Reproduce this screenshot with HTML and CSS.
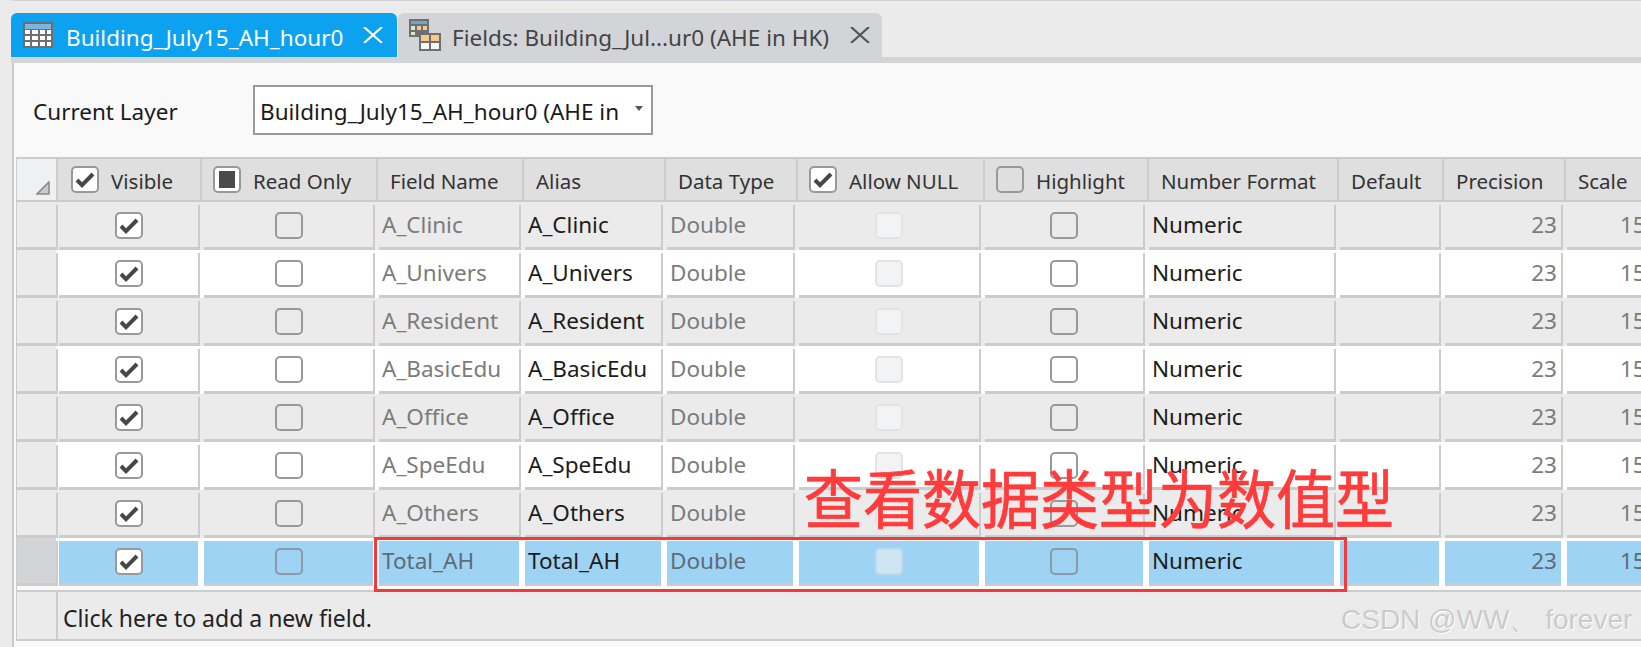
FILE: index.html
```html
<!DOCTYPE html>
<html>
<head>
	<meta charset="utf-8">
	<title>Fields: Building_July15_AH_hour0</title>
	<link rel="stylesheet" href="styles.css">
</head>
<body>
	<svg class="defs" width="0" height="0">
		<symbol id="check" viewBox="0 0 28 27">
			<path d="M6 14l5 5.2L22 8" fill="none" stroke="#484848" stroke-width="4"/>
		</symbol>
	</svg>

	<div class="tabs">
		<div class="tab tab-active">
			<svg class="tab-icon" width="30" height="26" viewBox="0 0 30 26">
				<rect width="30" height="26" fill="#6f6f6f"/>
				<rect x="2" y="2" width="26" height="5" fill="#7cb5e3"/>
				<path d="M2 8h5v4H2zM9 8h6v4H9zM17 8h5v4h-5zM24 8h4v4h-4zM2 14h5v4H2zM9 14h6v4H9zM17 14h5v4h-5zM24 14h4v4h-4zM2 20h5v4H2zM9 20h6v4H9zM17 20h5v4h-5zM24 20h4v4h-4z" fill="#fff"/>
			</svg>
			<span class="tab-title">Building_July15_AH_hour0</span>
			<svg class="tab-close" width="20" height="16" viewBox="0 0 20 16"><path d="M1 0l18 16M19 0L1 16" stroke-width="2.2"/></svg>
		</div>
		<div class="tab">
			<svg class="tab-icon" width="32" height="32" viewBox="0 0 32 32">
				<rect width="20" height="18" fill="#707070"/>
				<rect x="2" y="2" width="16" height="3" fill="#6ba6d8"/>
				<path d="M2 7h4v4H2zM2 13h4v3H2z" fill="#d5e8d0"/>
				<path d="M8 7h4v4H8zM14 7h4v4h-4z" fill="#f6c88f"/>
				<rect x="10" y="14" width="22" height="18" fill="#6f6f6f"/>
				<path d="M12 16h8v6h-8zM22 16h8v6h-8z" fill="#f8c98e"/>
				<path d="M12 24h8v6h-8zM22 24h8v6h-8z" fill="#f7f7f7"/>
			</svg>
			<span class="tab-title">Fields: Building_Jul...ur0 (AHE in HK)</span>
			<svg class="tab-close" width="20" height="16" viewBox="0 0 20 16"><path d="M1 0l18 16M19 0L1 16" stroke-width="2.2"/></svg>
		</div>
	</div>
	<div class="tab-strip"></div>

	<div class="panel">
		<div class="toolbar">
			<label class="layer-label">Current Layer</label>
			<div class="combo">
				<span class="combo-text">Building_July15_AH_hour0 (AHE in</span>
				<span class="combo-caret"></span>
			</div>
		</div>

		<div class="table">
			<div class="head">
				<div class="corner">
					<svg width="14" height="14" viewBox="0 0 14 14"><path d="M13 1v12H1z" fill="#c9cacd" stroke="#8c8c8c" stroke-width="1.6"/></svg>
				</div>
				<div class="th th-check th-visible"><span class="box box-white"><svg><use href="#check"/></svg></span><span class="th-label">Visible</span></div>
				<div class="th th-check th-readonly"><span class="box box-white"><i class="square"></i></span><span class="th-label">Read Only</span></div>
				<div class="th"><span class="th-label">Field Name</span></div>
				<div class="th th-alias"><span class="th-label">Alias</span></div>
				<div class="th"><span class="th-label">Data Type</span></div>
				<div class="th th-check"><span class="box box-white"><svg><use href="#check"/></svg></span><span class="th-label">Allow NULL</span></div>
				<div class="th th-check"><span class="box"></span><span class="th-label">Highlight</span></div>
				<div class="th"><span class="th-label">Number Format</span></div>
				<div class="th"><span class="th-label">Default</span></div>
				<div class="th"><span class="th-label">Precision</span></div>
				<div class="th"><span class="th-label">Scale</span></div>
			</div>

			<div class="row row-gray">
				<div class="rowhead"></div>
				<div class="td td-first"><div class="in mid"><span class="box box-white"><svg><use href="#check"/></svg></span></div></div>
				<div class="td"><div class="in mid"><span class="box"></span></div></div>
				<div class="td"><div class="in dim">A_Clinic</div></div>
				<div class="td"><div class="in strong">A_Clinic</div></div>
				<div class="td"><div class="in dim">Double</div></div>
				<div class="td"><div class="in mid"><span class="box box-off"></span></div></div>
				<div class="td"><div class="in mid"><span class="box"></span></div></div>
				<div class="td"><div class="in strong">Numeric</div></div>
				<div class="td"><div class="in"></div></div>
				<div class="td"><div class="in dim num">23</div></div>
				<div class="td"><div class="in dim scale">15</div></div>
			</div>
			<div class="row">
				<div class="rowhead"></div>
				<div class="td td-first"><div class="in mid"><span class="box box-white"><svg><use href="#check"/></svg></span></div></div>
				<div class="td"><div class="in mid"><span class="box"></span></div></div>
				<div class="td"><div class="in dim">A_Univers</div></div>
				<div class="td"><div class="in strong">A_Univers</div></div>
				<div class="td"><div class="in dim">Double</div></div>
				<div class="td"><div class="in mid"><span class="box box-off"></span></div></div>
				<div class="td"><div class="in mid"><span class="box"></span></div></div>
				<div class="td"><div class="in strong">Numeric</div></div>
				<div class="td"><div class="in"></div></div>
				<div class="td"><div class="in dim num">23</div></div>
				<div class="td"><div class="in dim scale">15</div></div>
			</div>
			<div class="row row-gray">
				<div class="rowhead"></div>
				<div class="td td-first"><div class="in mid"><span class="box box-white"><svg><use href="#check"/></svg></span></div></div>
				<div class="td"><div class="in mid"><span class="box"></span></div></div>
				<div class="td"><div class="in dim">A_Resident</div></div>
				<div class="td"><div class="in strong">A_Resident</div></div>
				<div class="td"><div class="in dim">Double</div></div>
				<div class="td"><div class="in mid"><span class="box box-off"></span></div></div>
				<div class="td"><div class="in mid"><span class="box"></span></div></div>
				<div class="td"><div class="in strong">Numeric</div></div>
				<div class="td"><div class="in"></div></div>
				<div class="td"><div class="in dim num">23</div></div>
				<div class="td"><div class="in dim scale">15</div></div>
			</div>
			<div class="row">
				<div class="rowhead"></div>
				<div class="td td-first"><div class="in mid"><span class="box box-white"><svg><use href="#check"/></svg></span></div></div>
				<div class="td"><div class="in mid"><span class="box"></span></div></div>
				<div class="td"><div class="in dim">A_BasicEdu</div></div>
				<div class="td"><div class="in strong">A_BasicEdu</div></div>
				<div class="td"><div class="in dim">Double</div></div>
				<div class="td"><div class="in mid"><span class="box box-off"></span></div></div>
				<div class="td"><div class="in mid"><span class="box"></span></div></div>
				<div class="td"><div class="in strong">Numeric</div></div>
				<div class="td"><div class="in"></div></div>
				<div class="td"><div class="in dim num">23</div></div>
				<div class="td"><div class="in dim scale">15</div></div>
			</div>
			<div class="row row-gray">
				<div class="rowhead"></div>
				<div class="td td-first"><div class="in mid"><span class="box box-white"><svg><use href="#check"/></svg></span></div></div>
				<div class="td"><div class="in mid"><span class="box"></span></div></div>
				<div class="td"><div class="in dim">A_Office</div></div>
				<div class="td"><div class="in strong">A_Office</div></div>
				<div class="td"><div class="in dim">Double</div></div>
				<div class="td"><div class="in mid"><span class="box box-off"></span></div></div>
				<div class="td"><div class="in mid"><span class="box"></span></div></div>
				<div class="td"><div class="in strong">Numeric</div></div>
				<div class="td"><div class="in"></div></div>
				<div class="td"><div class="in dim num">23</div></div>
				<div class="td"><div class="in dim scale">15</div></div>
			</div>
			<div class="row">
				<div class="rowhead"></div>
				<div class="td td-first"><div class="in mid"><span class="box box-white"><svg><use href="#check"/></svg></span></div></div>
				<div class="td"><div class="in mid"><span class="box"></span></div></div>
				<div class="td"><div class="in dim">A_SpeEdu</div></div>
				<div class="td"><div class="in strong">A_SpeEdu</div></div>
				<div class="td"><div class="in dim">Double</div></div>
				<div class="td"><div class="in mid"><span class="box box-off"></span></div></div>
				<div class="td"><div class="in mid"><span class="box"></span></div></div>
				<div class="td"><div class="in strong">Numeric</div></div>
				<div class="td"><div class="in"></div></div>
				<div class="td"><div class="in dim num">23</div></div>
				<div class="td"><div class="in dim scale">15</div></div>
			</div>
			<div class="row row-gray">
				<div class="rowhead"></div>
				<div class="td td-first"><div class="in mid"><span class="box box-white"><svg><use href="#check"/></svg></span></div></div>
				<div class="td"><div class="in mid"><span class="box"></span></div></div>
				<div class="td"><div class="in dim">A_Others</div></div>
				<div class="td"><div class="in strong">A_Others</div></div>
				<div class="td"><div class="in dim">Double</div></div>
				<div class="td"><div class="in mid"><span class="box box-off"></span></div></div>
				<div class="td"><div class="in mid"><span class="box"></span></div></div>
				<div class="td"><div class="in strong">Numeric</div></div>
				<div class="td"><div class="in"></div></div>
				<div class="td"><div class="in dim num">23</div></div>
				<div class="td"><div class="in dim scale">15</div></div>
			</div>
			<div class="row row-selected">
				<div class="rowhead"></div>
				<div class="td td-first"><div class="in mid"><span class="box box-white"><svg><use href="#check"/></svg></span></div></div>
				<div class="td"><div class="in mid"><span class="box"></span></div></div>
				<div class="td"><div class="in dim">Total_AH</div></div>
				<div class="td"><div class="in strong">Total_AH</div></div>
				<div class="td"><div class="in dim">Double</div></div>
				<div class="td"><div class="in mid"><span class="box box-off"></span></div></div>
				<div class="td"><div class="in mid"><span class="box"></span></div></div>
				<div class="td"><div class="in strong">Numeric</div></div>
				<div class="td"><div class="in"></div></div>
				<div class="td"><div class="in dim num">23</div></div>
				<div class="td"><div class="in dim scale">15</div></div>
			</div>

			<div class="add-row">
				<div class="add-corner"></div>
				<div class="add-text">Click here to add a new field.</div>
			</div>
		</div>
	</div>

	<!-- annotation drawn over the screenshot -->
	<div class="note-box"></div>
	<div class="note-text">查看数据类型为数值型</div>
	<div class="watermark">CSDN @WW、 forever</div>
</body>
</html>
```

FILE: styles.css
```css
html, body {
	margin: 0;
	padding: 0;
	width: 100%;
	height: 100%;
	overflow: hidden;
}
body {
	position: relative;
	box-sizing: border-box;
	padding-top: 13px;
	background-color: #ebebeb;
	font-family: "Noto Sans", "Open Sans", sans-serif;
	font-size: 22.5px;
	color: #222;
}
body::before {
	content: '';
	display: block;
	height: 1px;
	margin: -13px 0 12px 11px;
	background-color: #d3d4d8;
}
.defs {
	display: block;
	height: 0;
}

/* tabs */
.tabs {
	display: flex;
	gap: 1px;
	height: 44px;
	margin-left: 11px;
}
.tab {
	display: flex;
	align-items: center;
	width: 484px;
	box-sizing: border-box;
	padding-left: 11px;
	border-radius: 6px 6px 0 0;
	background-color: #d3d4d8;
	color: #444;
}
.tab-active {
	width: 386px;
	padding-left: 12px;
	background-color: #0ca2ef;
	color: #fff;
}
.tab-icon {
	flex: none;
	margin-right: 11px;
}
.tab-active .tab-icon {
	margin-right: 13px;
}
.tab-title {
	flex: none;
	width: 398px;
	padding-top: 4px;
	white-space: nowrap;
}
.tab-active .tab-title {
	width: 297px;
}
.tab-close {
	flex: none;
	fill: none;
	stroke: #555;
}
.tab-active .tab-close {
	stroke: #fff;
}
.tab-strip {
	height: 6px;
	margin-left: 11px;
	background-color: #d3d4d8;
}

/* panel */
.panel {
	margin-left: 12px;
	height: 584px;
	border-left: 2px solid #ccc;
	background-color: #f9f9f9;
}
.toolbar {
	display: flex;
	align-items: center;
	height: 94px;
	padding-left: 19px;
}
.layer-label {
	width: 220px;
	padding-top: 3px;
	color: #1a1a1a;
}
.combo {
	display: flex;
	align-items: center;
	box-sizing: border-box;
	width: 400px;
	height: 50px;
	padding-left: 5px;
	border: 2px solid #999;
	background-color: #fff;
	color: #1a1a1a;
}
.combo-text {
	width: 362px;
	padding-top: 3px;
	overflow: hidden;
	white-space: nowrap;
}
.combo-caret {
	margin: -4px 0 0 13px;
	border-left: 4px solid transparent;
	border-right: 4px solid transparent;
	border-top: 5px solid #555;
}

/* table */
.table {
	margin-left: 2px;
	width: 1625px;
	border-left: 1px solid #ccc;
}
.head {
	display: grid;
	grid-template-columns: 39px 144px 176px 146px 142px 132px 187px 164px 190px 105px 122px 1fr;
	height: 41px;
	border-top: 2px solid #ccc;
	border-bottom: 2px solid #ccc;
	background-color: #dfdfdf;
	font-size: 20.5px;
}
.corner {
	display: flex;
	justify-content: flex-end;
	align-items: flex-end;
	padding: 0 6px 5px 0;
	background-color: #eff0f2;
}
.th {
	display: flex;
	align-items: center;
	padding-left: 12px;
	border-left: 2px solid #ccc;
	white-space: nowrap;
	color: #333;
}
.th-label {
	padding-top: 3px;
}
.th-alias {
	padding-left: 12px;
}
.th-check {
	padding-left: 11px;
}
.th-check .box {
	margin-right: 12px;
}
.th-visible {
	padding-left: 13px;
}
.box {
	display: flex;
	align-items: center;
	justify-content: center;
	flex: none;
	box-sizing: border-box;
	width: 28px;
	height: 27px;
	border: 2px solid #999;
	border-radius: 5px;
}
.box svg {
	flex: none;
	width: 28px;
	height: 27px;
}
.box-white {
	background-color: #fff;
}
.box-off {
	border-color: #e2e3e5;
	background-color: #f2f3f5;
}
.square {
	width: 16px;
	height: 17px;
	background-color: #4a4a4a;
}

.row {
	display: grid;
	grid-template-columns: 39px 142px 175px 146px 142px 132px 186px 164px 191px 105px 122px 1fr;
	height: 48px;
	background-color: #fff;
}
.row-gray {
	background-color: #ebebeb;
}
.rowhead {
	border-bottom: 3px solid #ccc;
	background-color: #ebebeb;
}
.td {
	margin-top: 3px;
	padding-left: 4px;
	border-left: 2px solid #ccc;
}
.td-first {
	padding-left: 1px;
}
.in {
	display: flex;
	align-items: center;
	box-sizing: border-box;
	height: 100%;
	padding: 0 0 3px 3px;
	border-bottom: 3px solid #ccc;
	white-space: nowrap;
	overflow: hidden;
}
.mid {
	justify-content: center;
	padding: 0 0 1px;
}
.num {
	justify-content: flex-end;
	padding-right: 4px;
}
.scale {
	padding-left: 53px;
}
.dim {
	color: #7b7b7b;
}
.strong {
	color: #1c1c1c;
}
.row-selected .rowhead {
	background-color: #d3d4d8;
}
.row-selected .td {
	border-left-color: #fff;
}
.row-selected .td-first {
	border-left-color: #ccc;
}
.row-selected .in {
	background-color: #9fd3f3;
}
.row-selected .dim {
	color: #5d6b77;
}
.row-selected .box-off {
	border-color: #bfdcef;
	background-color: #cfe5f4;
}
.row-selected .box:not(.box-white):not(.box-off) {
	border-color: #8a9aa6;
}

.add-row {
	display: flex;
	height: 47px;
	margin-top: 4px;
	border-top: 2px solid #ccc;
	border-bottom: 2px solid #ccc;
	background-color: #ebebeb;
}
.add-corner {
	width: 39px;
	border-right: 2px solid #ccc;
}
.add-text {
	display: flex;
	align-items: center;
	padding: 4px 0 0 5px;
	font-size: 23px;
	color: #222;
}

/* overlays */
.note-box {
	position: absolute;
	left: 374px;
	top: 537px;
	width: 973px;
	height: 55px;
	box-sizing: border-box;
	border: 3px solid #f33a3a;
}
.note-text {
	position: absolute;
	left: 804px;
	top: 453px;
	font-family: "Noto Sans CJK SC", sans-serif;
	font-size: 59px;
	line-height: 86px;
	white-space: nowrap;
	color: #ff3b3b;
	-webkit-text-stroke: 0.7px #ff3b3b;
	transform: scaleY(1.07);
}
.watermark {
	position: absolute;
	left: 1341px;
	top: 605px;
	font-family: "Liberation Sans", sans-serif;
	font-size: 28px;
	line-height: 30px;
	white-space: nowrap;
	color: #cbcbcb;
	text-shadow: 1px 1px 0 #fff;
}
```
